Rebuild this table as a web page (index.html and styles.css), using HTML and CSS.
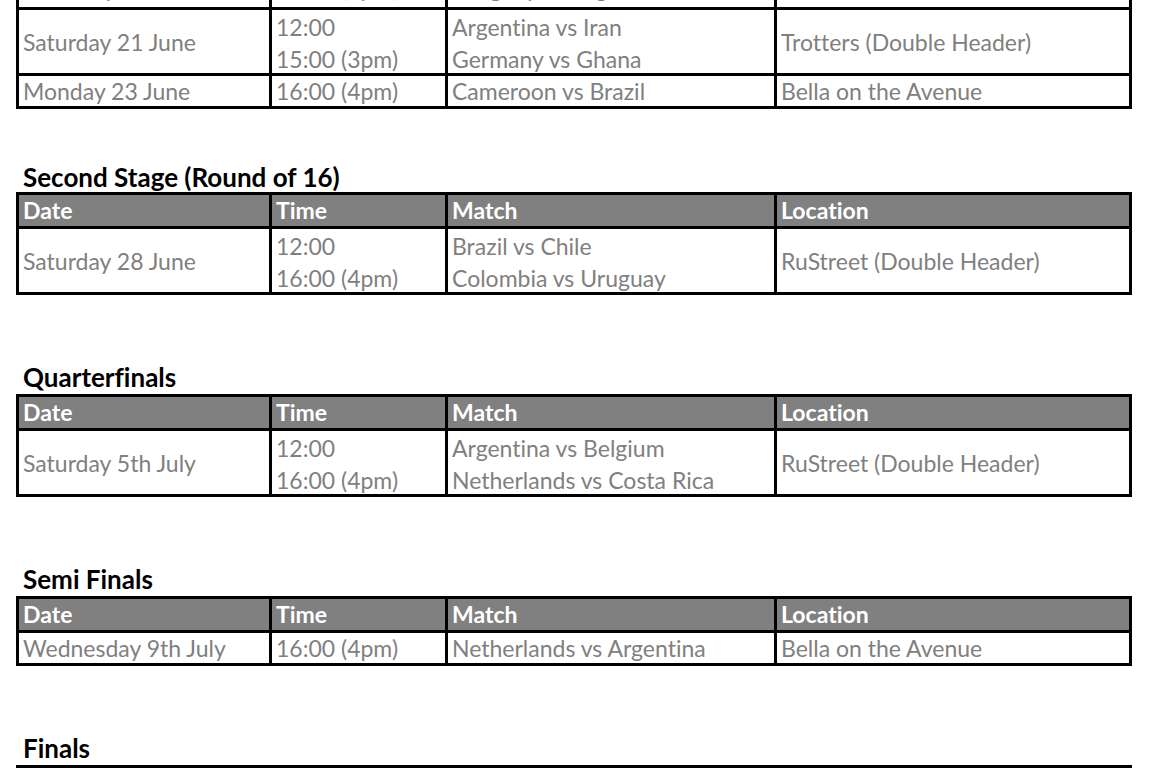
FILE: index.html
```html
<!DOCTYPE html>
<html lang="en">
<head>
<meta charset="utf-8">
<title>World Cup Viewing Schedule</title>
<link rel="stylesheet" href="styles.css">
</head>
<body>
<div class="page">
  <div class="sheet cut">
    <div class="c top">Thursday 19 June</div>
    <div class="c top">16:00 (4pm)</div>
    <div class="c top">Uruguay vs England</div>
    <div class="c top">Bella on the Avenue</div>

    <div class="c dbl mid">Saturday 21 June</div>
    <div class="c dbl lines"><div>12:00</div><div>15:00 (3pm)</div></div>
    <div class="c dbl lines"><div>Argentina vs Iran</div><div>Germany vs Ghana</div></div>
    <div class="c dbl mid">Trotters (Double Header)</div>

    <div class="c">Monday 23 June</div>
    <div class="c">16:00 (4pm)</div>
    <div class="c">Cameroon vs Brazil</div>
    <div class="c">Bella on the Avenue</div>
  </div>

  <h2 class="title first">Second Stage (Round of 16)</h2>
  <div class="sheet">
    <div class="c h">Date</div>
    <div class="c h">Time</div>
    <div class="c h">Match</div>
    <div class="c h">Location</div>

    <div class="c dbl mid">Saturday 28 June</div>
    <div class="c dbl lines"><div>12:00</div><div>16:00 (4pm)</div></div>
    <div class="c dbl lines"><div>Brazil vs Chile</div><div>Colombia vs Uruguay</div></div>
    <div class="c dbl mid">RuStreet (Double Header)</div>
  </div>

  <h2 class="title">Quarterfinals</h2>
  <div class="sheet">
    <div class="c h">Date</div>
    <div class="c h">Time</div>
    <div class="c h">Match</div>
    <div class="c h">Location</div>

    <div class="c dbl mid">Saturday 5th July</div>
    <div class="c dbl lines"><div>12:00</div><div>16:00 (4pm)</div></div>
    <div class="c dbl lines"><div>Argentina vs Belgium</div><div>Netherlands vs Costa Rica</div></div>
    <div class="c dbl mid">RuStreet (Double Header)</div>
  </div>

  <h2 class="title">Semi Finals</h2>
  <div class="sheet">
    <div class="c h">Date</div>
    <div class="c h">Time</div>
    <div class="c h">Match</div>
    <div class="c h">Location</div>

    <div class="c">Wednesday 9th July</div>
    <div class="c">16:00 (4pm)</div>
    <div class="c">Netherlands vs Argentina</div>
    <div class="c">Bella on the Avenue</div>
  </div>

  <h2 class="title last">Finals</h2>
  <div class="sheet">
    <div class="c h">Date</div>
    <div class="c h">Time</div>
    <div class="c h">Match</div>
    <div class="c h">Location</div>

    <div class="c">Monday 14th July</div>
    <div class="c">07:00 (7am)</div>
    <div class="c">Germany vs Argentina</div>
    <div class="c">TBC</div>
  </div>
</div>
</body>
</html>
```

FILE: styles.css
```css
html, body {
  margin: 0;
  padding: 0;
  background: #ffffff;
}

body {
  overflow: hidden;
  height: 768px;
}

.page {
  padding-left: 16px;
  font-family: Lato, "Open Sans", sans-serif;
  font-variant-ligatures: none;
}

.sheet {
  display: grid;
  grid-template-columns: 250px 173px 326px 352px;
  gap: 3px;
  background: #000;
  border: 3px solid #000;
  width: max-content;
}

.sheet.cut {
  margin-top: -26px;
}

.c {
  background: #fff;
  color: #808080;
  font-size: 23px;
  line-height: 30px;
  height: 30px;
  padding-left: 4px;
  box-sizing: border-box;
  white-space: nowrap;
  overflow: hidden;
}

.c.top {
  line-height: 23px;
}

.c.h {
  background: #808080;
  color: #fff;
  font-weight: 700;
  height: 31px;
  line-height: 31px;
}

.c.dbl {
  height: 63px;
}

.c.mid {
  display: flex;
  align-items: center;
}

.c.lines {
  padding-top: 1px;
  line-height: 32px;
}

.title {
  margin: 67px 0 0;
  padding: 0 0 2px 7px;
  font-size: 26px;
  font-weight: 700;
  line-height: 30px;
  color: #000;
}

.title.first {
  margin-top: 53px;
  padding-bottom: 0;
}

.title.last {
  margin-top: 67px;
}
```
